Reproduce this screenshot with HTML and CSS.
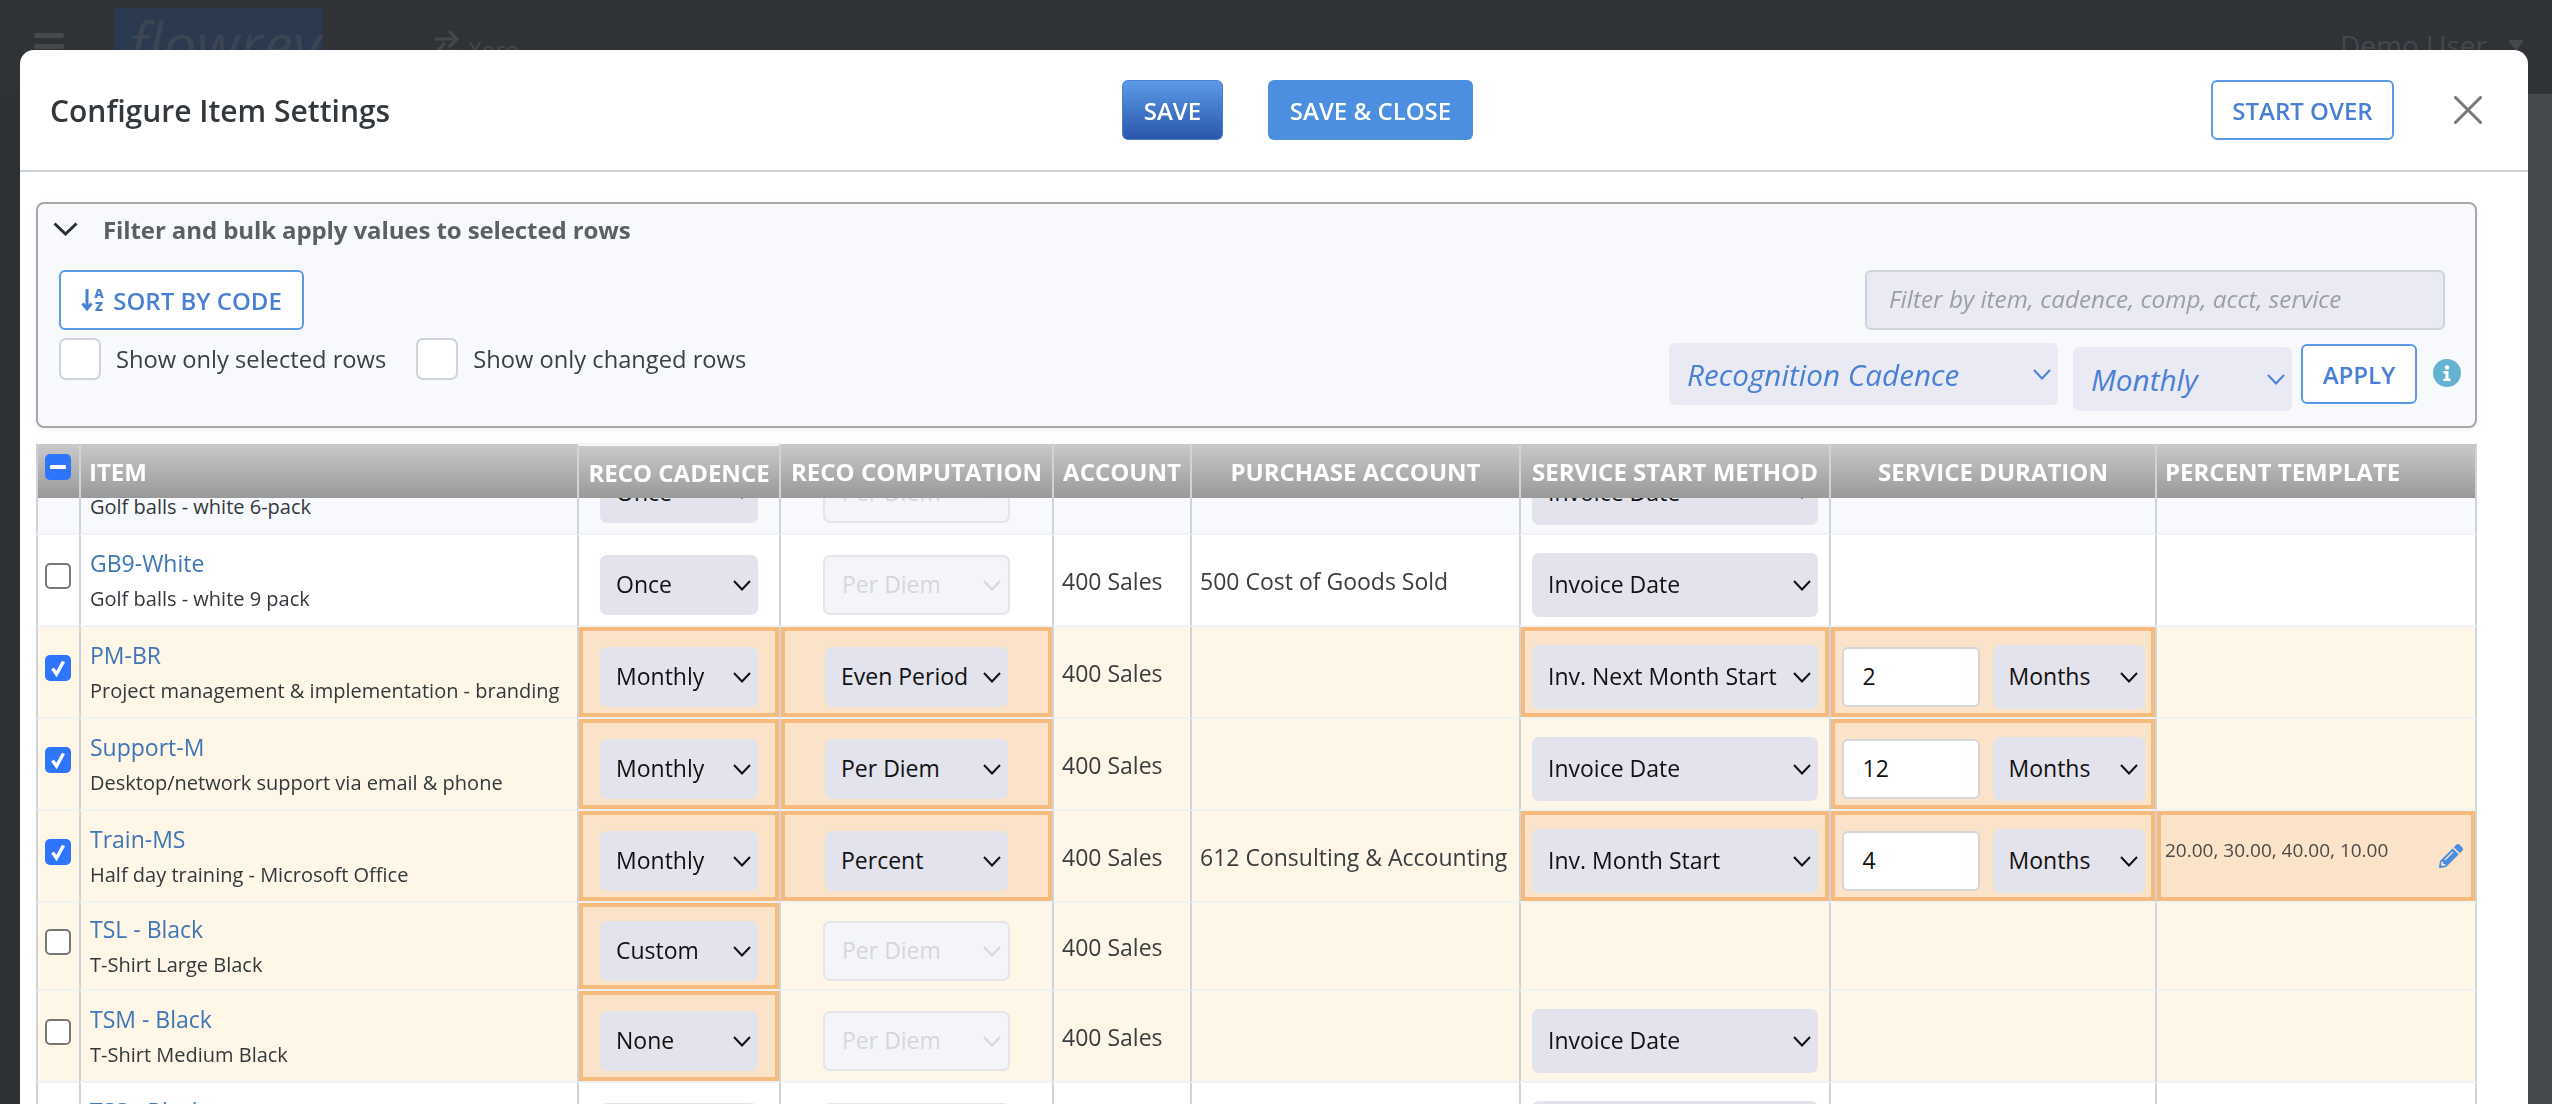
FILE: index.html
```html
<!DOCTYPE html>
<html lang="en">
<head>
<meta charset="utf-8">
<title>Configure Item Settings</title>
<link rel="stylesheet" href="styles.css">
</head>
<body>
<svg class="defs" width="0" height="0" aria-hidden="true">
  <symbol id="chev" viewBox="0 0 18 11"><path d="M1 1l8 8.5L17 1" fill="none" stroke="currentColor" stroke-width="2"/></symbol>
  <symbol id="tick" viewBox="0 0 26 26"><path d="M7.5 13.5l4 5.5L18.5 6.5" fill="none" stroke="#fff" stroke-width="3.4"/></symbol>
</svg>
<div class="app">
  <header class="topbar">
    <div class="burger"><i></i><i></i><i></i></div>
    <div class="logo">flowrev</div>
    <div class="xero">
      <svg width="26" height="44" viewBox="0 0 26 44"><path d="M1 13h20M15 5l8 8-8 8M25 25H5M11 17l-8 8 8 8" fill="none" stroke="currentColor" stroke-width="3"/></svg>
      <span>Xero</span>
    </div>
    <div class="user"><span>Demo User</span><b class="caret"></b></div>
  </header>
  <div class="backdrop"><aside class="side"></aside><main class="content"></main></div>
</div>

<section class="modal">
  <div class="modal-head">
    <h1 class="modal-title">Configure Item Settings</h1>
    <button class="btn btn-grad">SAVE</button>
    <button class="btn btn-solid">SAVE &amp; CLOSE</button>
    <button class="btn btn-line over">START OVER</button>
    <svg class="close" width="28" height="28" viewBox="0 0 28 28"><path d="M1.5 1.5l25 25M26.5 1.5l-25 25" stroke="#777" stroke-width="3" fill="none" stroke-linecap="round"/></svg>
  </div>
  <div class="modal-body">
    <div class="panel">
      <div class="panel-title">
        <svg width="25" height="14" viewBox="0 0 25 14"><path d="M1.5 1.5l11 10.500 11-10.500" fill="none" stroke="#2b2f33" stroke-width="3"/></svg>
        <span>Filter and bulk apply values to selected rows</span>
      </div>
      <div class="panel-main">
        <div class="panel-left">
          <button class="btn btn-line sort">
            <svg width="24" height="24" viewBox="0 0 24 24"><path d="M6 1v20M1.500 15.500L6 21l4.500-5.500" fill="none" stroke="currentColor" stroke-width="3"/><text x="18" y="10" class="az">A</text><text x="18" y="23" class="az">Z</text></svg>
            SORT BY CODE
          </button>
          <div class="checks">
            <label class="check"><i class="box"></i>Show only selected rows</label>
            <label class="check"><i class="box"></i>Show only changed rows</label>
          </div>
        </div>
        <div class="panel-right">
          <div class="filter">Filter by item, cadence, comp, acct, service</div>
          <div class="bulk">
            <div class="bsel bsel-a"><span>Recognition Cadence</span><svg class="chv"><use href="#chev"/></svg></div>
            <div class="bsel bsel-b"><span>Monthly</span><svg class="chv"><use href="#chev"/></svg></div>
            <button class="btn btn-line apply">APPLY</button>
            <svg class="info" width="28" height="28" viewBox="0 0 28 28"><circle cx="14" cy="14" r="14" fill="#66b3d1"/><circle cx="14" cy="8.500" r="2.200" fill="#fff"/><path d="M10.500 12h5v7.500h2V22h-7v-2.500h2V14.500h-2z" fill="#fff"/></svg>
          </div>
        </div>
      </div>
    </div>

    <div class="grid-wrap">
      <table class="grid grid-head">
        <colgroup><col class="c0"><col class="c1"><col class="c2"><col class="c3"><col class="c4"><col class="c5"><col class="c6"><col class="c7"><col class="c8"></colgroup>
        <thead>
          <tr>
            <th class="th-check"><span class="cb cb-mixed"><i></i></span></th>
            <th class="left">ITEM</th>
            <th class="th-low">RECO CADENCE</th>
            <th>RECO COMPUTATION</th>
            <th>ACCOUNT</th>
            <th>PURCHASE ACCOUNT</th>
            <th>SERVICE START METHOD</th>
            <th>SERVICE DURATION</th>
            <th class="left">PERCENT TEMPLATE</th>
          </tr>
        </thead>
      </table>
      <div class="grid-clip">
        <table class="grid grid-body">
          <colgroup><col class="c0"><col class="c1"><col class="c2"><col class="c3"><col class="c4"><col class="c5"><col class="c6"><col class="c7"><col class="c8"></colgroup>
          <tbody>
            <tr class="tall stripe">
              <td><div class="cell cell-check"><span class="cb"></span></div></td>
              <td><div class="cell item"><a>GB6-White</a><p>Golf balls - white 6-pack</p></div></td>
              <td><div class="cell ctr"><div class="sel w-cad"><span>Once</span><svg class="chv"><use href="#chev"/></svg></div></div></td>
              <td><div class="cell ctr"><div class="sel dis w-dis"><span>Per Diem</span><svg class="chv"><use href="#chev"/></svg></div></div></td>
              <td><div class="cell txt"></div></td>
              <td><div class="cell txt"></div></td>
              <td><div class="cell ctr"><div class="sel w-start"><span>Invoice Date</span><svg class="chv"><use href="#chev"/></svg></div></div></td>
              <td><div class="cell"></div></td>
              <td><div class="cell"></div></td>
            </tr>
            <tr class="tall">
              <td><div class="cell cell-check"><span class="cb"></span></div></td>
              <td><div class="cell item"><a>GB9-White</a><p>Golf balls - white 9 pack</p></div></td>
              <td><div class="cell ctr"><div class="sel w-cad"><span>Once</span><svg class="chv"><use href="#chev"/></svg></div></div></td>
              <td><div class="cell ctr"><div class="sel dis w-dis"><span>Per Diem</span><svg class="chv"><use href="#chev"/></svg></div></div></td>
              <td><div class="cell txt">400 Sales</div></td>
              <td><div class="cell txt">500 Cost of Goods Sold</div></td>
              <td><div class="cell ctr"><div class="sel w-start"><span>Invoice Date</span><svg class="chv"><use href="#chev"/></svg></div></div></td>
              <td><div class="cell"></div></td>
              <td><div class="cell"></div></td>
            </tr>
            <tr class="tall warm">
              <td><div class="cell cell-check"><span class="cb on"><svg><use href="#tick"/></svg></span></div></td>
              <td><div class="cell item"><a>PM-BR</a><p>Project management &amp; implementation - branding</p></div></td>
              <td><div class="cell ctr chg"><div class="sel w-cad"><span>Monthly</span><svg class="chv"><use href="#chev"/></svg></div></div></td>
              <td><div class="cell ctr chg"><div class="sel w-comp"><span>Even Period</span><svg class="chv"><use href="#chev"/></svg></div></div></td>
              <td><div class="cell txt">400 Sales</div></td>
              <td><div class="cell txt"></div></td>
              <td><div class="cell ctr chg"><div class="sel w-start"><span>Inv. Next Month Start</span><svg class="chv"><use href="#chev"/></svg></div></div></td>
              <td><div class="cell ctr chg dur"><div class="num">2</div><div class="sel w-dur"><span>Months</span><svg class="chv"><use href="#chev"/></svg></div></div></td>
              <td><div class="cell"></div></td>
            </tr>
            <tr class="tall warm">
              <td><div class="cell cell-check"><span class="cb on"><svg><use href="#tick"/></svg></span></div></td>
              <td><div class="cell item"><a>Support-M</a><p>Desktop/network support via email &amp; phone</p></div></td>
              <td><div class="cell ctr chg"><div class="sel w-cad"><span>Monthly</span><svg class="chv"><use href="#chev"/></svg></div></div></td>
              <td><div class="cell ctr chg"><div class="sel w-comp"><span>Per Diem</span><svg class="chv"><use href="#chev"/></svg></div></div></td>
              <td><div class="cell txt">400 Sales</div></td>
              <td><div class="cell txt"></div></td>
              <td><div class="cell ctr"><div class="sel w-start"><span>Invoice Date</span><svg class="chv"><use href="#chev"/></svg></div></div></td>
              <td><div class="cell ctr chg dur"><div class="num">12</div><div class="sel w-dur"><span>Months</span><svg class="chv"><use href="#chev"/></svg></div></div></td>
              <td><div class="cell"></div></td>
            </tr>
            <tr class="tall warm">
              <td><div class="cell cell-check"><span class="cb on"><svg><use href="#tick"/></svg></span></div></td>
              <td><div class="cell item"><a>Train-MS</a><p>Half day training - Microsoft Office</p></div></td>
              <td><div class="cell ctr chg"><div class="sel w-cad"><span>Monthly</span><svg class="chv"><use href="#chev"/></svg></div></div></td>
              <td><div class="cell ctr chg"><div class="sel w-comp"><span>Percent</span><svg class="chv"><use href="#chev"/></svg></div></div></td>
              <td><div class="cell txt">400 Sales</div></td>
              <td><div class="cell txt">612 Consulting &amp; Accounting</div></td>
              <td><div class="cell ctr chg"><div class="sel w-start"><span>Inv. Month Start</span><svg class="chv"><use href="#chev"/></svg></div></div></td>
              <td><div class="cell ctr chg dur"><div class="num">4</div><div class="sel w-dur"><span>Months</span><svg class="chv"><use href="#chev"/></svg></div></div></td>
              <td><div class="cell chg pct"><span>20.00, 30.00, 40.00, 10.00</span>
                <svg class="pencil" width="24" height="24" viewBox="0 0 512 512"><path fill="#4a8ddf" d="M497.900 142.100l-46.100 46.100c-4.700 4.700-12.300 4.700-17 0l-111-111c-4.700-4.700-4.700-12.300 0-17l46.100-46.100c18.700-18.700 49.100-18.700 67.900 0l60.100 60.100c18.800 18.700 18.800 49.100 0 67.900zM284.200 99.800L21.600 362.400.4 483.900c-2.900 16.400 11.400 30.600 27.800 27.800l121.500-21.300 262.600-262.600c4.700-4.700 4.700-12.300 0-17l-111-111c-4.800-4.700-12.400-4.700-17.100 0zM124.100 339.900c-5.500-5.500-5.500-14.300 0-19.800l154-154c5.500-5.500 14.300-5.500 19.800 0s5.500 14.300 0 19.800l-154 154c-5.500 5.500-14.300 5.500-19.800 0zM88 424h48v36.300l-64.500 11.300-31.100-31.100L51.700 376H88v48z"/></svg></div></td>
            </tr>
            <tr class="short warm">
              <td><div class="cell cell-check"><span class="cb"></span></div></td>
              <td><div class="cell item"><a>TSL - Black</a><p>T-Shirt Large Black</p></div></td>
              <td><div class="cell ctr chg"><div class="sel w-cad"><span>Custom</span><svg class="chv"><use href="#chev"/></svg></div></div></td>
              <td><div class="cell ctr"><div class="sel dis w-dis"><span>Per Diem</span><svg class="chv"><use href="#chev"/></svg></div></div></td>
              <td><div class="cell txt">400 Sales</div></td>
              <td><div class="cell txt"></div></td>
              <td><div class="cell"></div></td>
              <td><div class="cell"></div></td>
              <td><div class="cell"></div></td>
            </tr>
            <tr class="tall warm">
              <td><div class="cell cell-check"><span class="cb"></span></div></td>
              <td><div class="cell item"><a>TSM - Black</a><p>T-Shirt Medium Black</p></div></td>
              <td><div class="cell ctr chg"><div class="sel w-cad"><span>None</span><svg class="chv"><use href="#chev"/></svg></div></div></td>
              <td><div class="cell ctr"><div class="sel dis w-dis"><span>Per Diem</span><svg class="chv"><use href="#chev"/></svg></div></div></td>
              <td><div class="cell txt">400 Sales</div></td>
              <td><div class="cell txt"></div></td>
              <td><div class="cell ctr"><div class="sel w-start"><span>Invoice Date</span><svg class="chv"><use href="#chev"/></svg></div></div></td>
              <td><div class="cell"></div></td>
              <td><div class="cell"></div></td>
            </tr>
            <tr class="tall">
              <td><div class="cell cell-check"><span class="cb"></span></div></td>
              <td><div class="cell item"><a>TSS - Black</a><p>T-Shirt Small Black</p></div></td>
              <td><div class="cell ctr"><div class="sel w-cad"><span>Once</span><svg class="chv"><use href="#chev"/></svg></div></div></td>
              <td><div class="cell ctr"><div class="sel dis w-dis"><span>Per Diem</span><svg class="chv"><use href="#chev"/></svg></div></div></td>
              <td><div class="cell txt">400 Sales</div></td>
              <td><div class="cell txt"></div></td>
              <td><div class="cell ctr"><div class="sel w-start"><span>Invoice Date</span><svg class="chv"><use href="#chev"/></svg></div></div></td>
              <td><div class="cell"></div></td>
              <td><div class="cell"></div></td>
            </tr>
          </tbody>
        </table>
      </div>
    </div>
  </div>
</section>
</body>
</html>
```

FILE: styles.css
```css
* { box-sizing: border-box; }
html, body { margin: 0; height: 100%; overflow: hidden; }
body { font-family: "Open Sans", "Liberation Sans", sans-serif; color: #33383d; background: #2d3033; }
.defs { position: absolute; }
button { font-family: inherit; cursor: pointer; }
p, h1 { margin: 0; }

.app { height: 100%; display: flex; flex-direction: column; }
.topbar { height: 94px; background: #2f3237; display: flex; align-items: flex-start; color: #45484d; flex: none; }
.burger { margin: 33px 0 0 34px; width: 30px; display: flex; flex-direction: column; gap: 6px; }
.burger i { display: block; height: 5px; background: #45484d; border-radius: 2px; }
.logo { margin: 8px 0 0 50px; width: 208px; height: 86px; background: #2b3a4e; color: #3c4553; font-style: italic; font-size: 60px; line-height: 72px; padding-left: 15px; }
.xero { margin: 26px 0 0 112px; display: flex; gap: 8px; font-size: 24px; line-height: 32px; }
.xero span { margin-top: 8px; }
.user { margin: 26px 0 0 auto; padding-right: 28px; display: flex; gap: 21px; align-items: center; font-size: 28px; line-height: 38px; }
.caret { width: 0; height: 0; border: 8px solid transparent; border-top: 11px solid #45484d; border-bottom: 0; }
.backdrop { flex: 1; display: flex; }
.side { width: 20px; background: #2d3134; }
.content { flex: 1; background: #46494d; }

.modal { position: fixed; left: 20px; top: 50px; right: 24px; bottom: 0; background: #fff; border-radius: 14px 14px 0 0; display: flex; flex-direction: column; overflow: hidden; }
.modal-head { height: 122px; flex: none; border-bottom: 2px solid #ced4da; display: flex; align-items: flex-start; padding: 30px 46px 0 30px; }
.modal-title { flex: 0 0 1072px; font-size: 30px; font-weight: 600; line-height: 62px; color: #33383d; }
.btn { height: 60px; border-radius: 6px; font-size: 24px; font-weight: 600; padding: 0; background: #fff; border: 0; }
.btn-grad { width: 101px; background: linear-gradient(#5b9ae6, #2a56ab); color: #fff; border: 1px solid #4a80d4; }
.btn-solid { width: 205px; margin-left: 45px; background: #4c8fe0; color: #fff; }
.btn-line { border: 2px solid #5b9ae6; color: #4a80d4; }
.over { width: 183px; margin-left: auto; }
.close { margin: 16px 0 0 60px; flex: none; }

.modal-body { flex: 1; min-height: 0; display: flex; flex-direction: column; padding: 30px 51px 0 16px; }
.panel { height: 226px; flex: none; border: 2px solid #a8a8a8; border-radius: 8px; background: #f8f9fd; box-shadow: 0 2px 6px rgba(0,0,0,.05); }
.panel-title { height: 50px; padding: 0 0 0 15px; display: flex; align-items: center; gap: 25px; font-size: 24px; font-weight: 700; letter-spacing: -.1px; color: #5c6064; }
.panel-main { margin-top: 16px; display: flex; justify-content: space-between; padding: 0 14px 0 21px; }
.sort { width: 245px; display: flex; align-items: center; justify-content: center; gap: 8px; }
.az { font-size: 13px; font-weight: 800; fill: currentColor; text-anchor: middle; font-family: "Open Sans", sans-serif; }
.checks { margin-top: 8px; display: flex; gap: 30px; }
.check { display: flex; align-items: center; gap: 15px; font-size: 23.7px; line-height: 42px; color: #3b4045; }
.box { width: 42px; height: 42px; background: #fff; border: 2px solid #ced4da; border-radius: 7px; }
.panel-right { display: flex; flex-direction: column; align-items: flex-end; }
.filter { width: 580px; height: 60px; margin-right: 16px; padding-left: 22px; background: #e9eaf3; border: 2px solid #ced4da; border-radius: 6px; font-style: italic; font-size: 24.3px; line-height: 54px; color: #9c9ea3; }
.bulk { margin-top: 13px; display: flex; align-items: flex-start; }
.bsel { display: flex; align-items: center; justify-content: space-between; background: #e9eaf3; border-radius: 6px; color: #4a80d4; font-style: italic; font-size: 29.7px; padding: 0 7px 0 18px; }
.bsel-a { width: 389px; height: 62px; }
.bsel-b { width: 219px; height: 64px; margin: 4px 0 0 15px; }
.apply { width: 116px; margin: 1px 0 0 9px; }
.info { margin: 16px 0 0 16px; flex: none; }
.chv { width: 18px; height: 11px; flex: none; }

.grid-wrap { flex: 1; min-height: 0; margin-top: 15px; display: flex; flex-direction: column; }
.grid { border-collapse: separate; border-spacing: 0; table-layout: fixed; width: 2441px; }
.c0 { width: 43px; } .c1 { width: 498px; } .c2 { width: 202px; } .c3 { width: 273px; } .c4 { width: 138px; }
.c5 { width: 329px; } .c6 { width: 310px; } .c7 { width: 326px; } .c8 { width: 322px; }
.grid-head { flex: none; }
.grid-head th { height: 55px; padding: 0; border-left: 2px solid #ced4da; border-top: 1px solid #fff; background: linear-gradient(#c9c9c9, #999) padding-box; color: #fff; font-size: 24px; font-weight: 700; text-align: center; white-space: nowrap; overflow: visible; }
.grid-head th:last-child { border-right: 2px solid #ced4da; }
.grid-head th.left { text-align: left; padding-left: 8px; }
.grid-head .th-low { border-top: 3px solid #f6f6f6; }
.th-check { vertical-align: top; }
.th-check .cb { margin: 10px 0 0 7px; }
.grid-clip { flex: 1; min-height: 0; overflow: hidden; }
.grid-body { margin-top: -55px; }
.grid-body td { padding: 0; vertical-align: top; border-left: 2px solid #ced4da; border-bottom: 2px solid #f1f2f5; background: #fff; }
.grid-body td:last-child { border-right: 2px solid #ced4da; }
.stripe td { background: #f8f9fd; }
.warm td { background: #fef6e7; }
.cell { display: flex; height: 90px; }
.short .cell { height: 86px; }
.chg { background: #fae3c8; border: 4px solid #f6bb7c; }
.ctr { justify-content: center; align-items: center; }
.cell-check { align-items: center; padding: 0 0 8px 7px; }
.cb { display: block; width: 26px; height: 26px; background: #fff; border: 2px solid #777; border-radius: 5px; flex: none; }
.cb.on, .cb-mixed { background: #2f75fb; border: 0; }
.cb svg { display: block; width: 26px; height: 26px; }
.cb-mixed { display: flex; align-items: center; justify-content: center; }
.cb-mixed i { width: 16px; height: 4px; background: #fff; border-radius: 1px; }
.item { flex-direction: column; justify-content: center; padding: 2px 0 0 9px; }
.item a { font-size: 23px; line-height: 30px; color: #3f76b5; }
.item p { font-size: 20px; line-height: 30px; margin-top: 6px; color: #33383d; white-space: nowrap; }
.txt { align-items: center; padding: 1px 0 0 8px; font-size: 23px; color: #3a3d40; white-space: nowrap; }
.sel { display: flex; align-items: center; justify-content: space-between; margin-top: 10px; height: 60px; background: #e2e3ec; border-radius: 7px; padding: 0 7px 0 16px; font-size: 23px; color: #111; flex: none; white-space: nowrap; }
.sel span { margin-top: -2px; }
.w-cad { width: 158px; }
.w-comp { width: 183px; }
.w-dis { width: 187px; }
.w-start { width: 286px; height: 64px; }
.w-dur { width: 152px; height: 64px; }
.dis { background: #f4f5f8; border: 2px solid #e4e5e9; color: #d6d7da; padding-left: 17px; }
.dur { gap: 13px; }
.num { width: 138px; height: 60px; margin-top: 10px; background: #fff; border: 2px solid #d4d6da; border-radius: 6px; font-size: 23px; line-height: 54px; padding-left: 19px; color: #111; }
.pct { justify-content: space-between; align-items: flex-start; padding: 23px 8px 0 4px; font-size: 19px; line-height: 24px; color: #4a4a4a; }
.pencil { margin-top: 6px; }
```
